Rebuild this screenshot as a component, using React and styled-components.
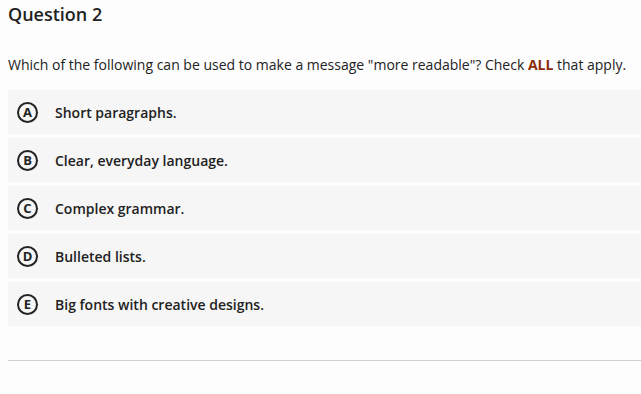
import React from "react";
import styled, { createGlobalStyle } from "styled-components";

const Global = createGlobalStyle`
  html, body { margin: 0; padding: 0; background: #fdfdfd; }
  body { font-family: "Open Sans", "Liberation Sans", sans-serif; color: #222; }
`;

const Page = styled.div`
  padding: 0 0 0 8px;
`;

const Title = styled.h2`
  margin: 0;
  padding-top: 1px;
  font-size: 18px;
  font-weight: 600;
  line-height: 27px;
  color: #222;
`;

const Prompt = styled.p`
  margin: 27px 0 0;
  font-size: 14px;
  line-height: 19px;
  color: #222;
  strong { color: #8b2b0b; font-weight: 700; }
`;

const Options = styled.div`
  margin-top: 16px;
  display: flex;
  flex-direction: column;
  gap: 4px;
`;

const Option = styled.div`
  height: 44px;
  background: #f6f6f6;
  display: flex;
  align-items: center;
  padding-left: 9px;
  gap: 17px;
`;

const Letter = styled.span`
  box-sizing: border-box;
  width: 21px;
  height: 21px;
  border: 2px solid #222;
  border-radius: 50%;
  display: flex;
  align-items: center;
  justify-content: center;
  font-size: 13px;
  font-weight: 700;
  line-height: 1;
  color: #222;
`;

const Label = styled.span`
  font-size: 14px;
  font-weight: 600;
  color: #222;
`;

const Rule = styled.hr`
  margin: 34px 0 0;
  border: 0;
  height: 1px;
  background: #cfcfcf;
`;

const options = [
  ["A", "Short paragraphs."],
  ["B", "Clear, everyday language."],
  ["C", "Complex grammar."],
  ["D", "Bulleted lists."],
  ["E", "Big fonts with creative designs."],
];

export default function App() {
  return (
    <Page>
      <Global />
      <Title>Question 2</Title>
      <Prompt>
        Which of the following can be used to make a message "more readable"? Check <strong>ALL</strong> that apply.
      </Prompt>
      <Options>
        {options.map(([l, t]) => (
          <Option key={l}>
            <Letter>{l}</Letter>
            <Label>{t}</Label>
          </Option>
        ))}
      </Options>
      <Rule />
    </Page>
  );
}
